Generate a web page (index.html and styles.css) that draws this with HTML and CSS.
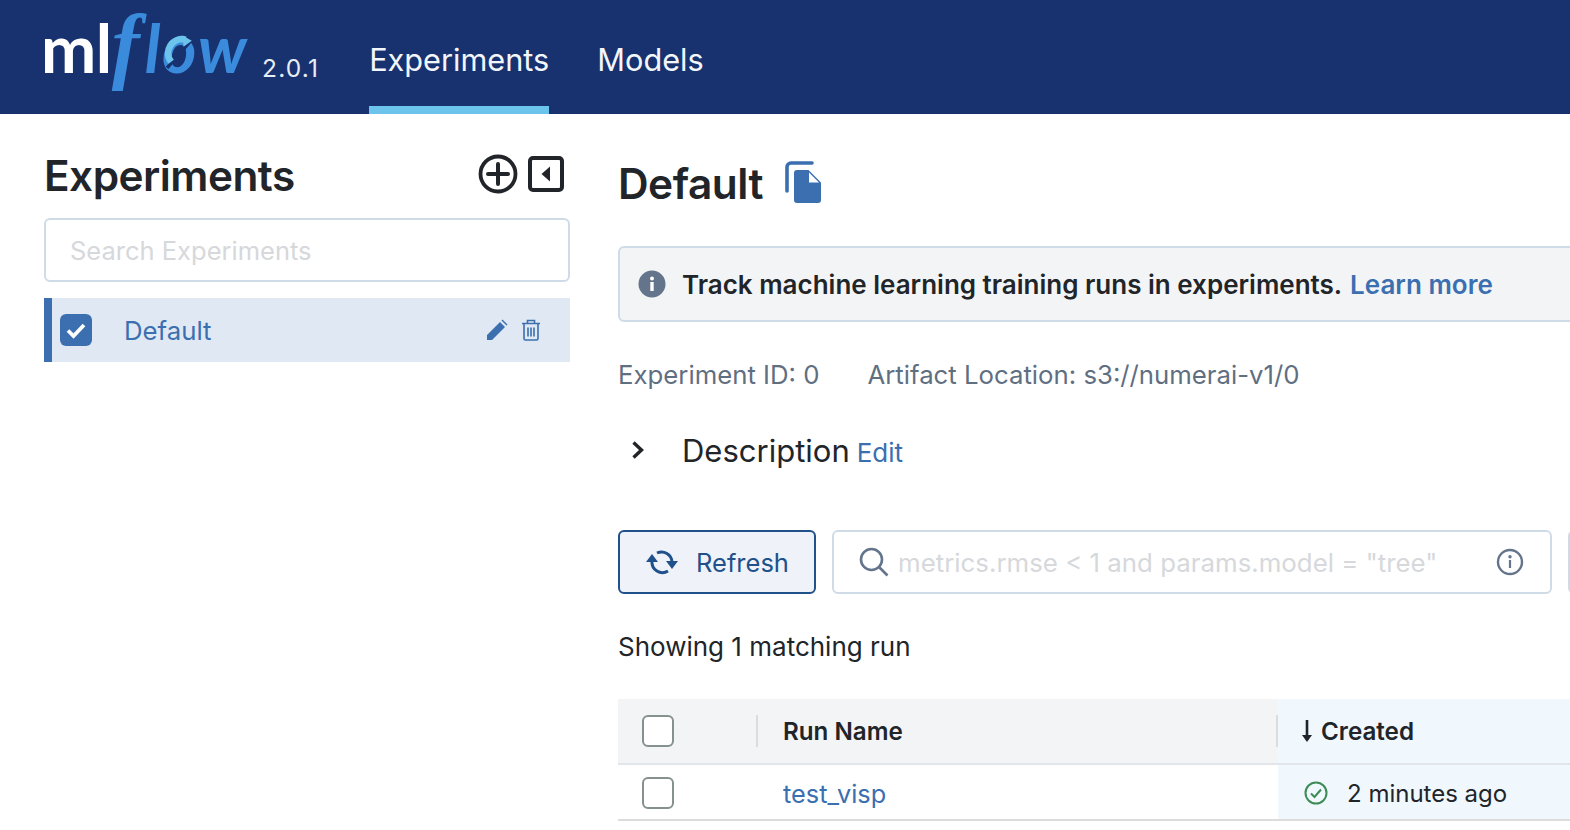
FILE: index.html
```html
<!DOCTYPE html>
<html lang="en">
<head>
  <meta charset="UTF-8">
  <title>MLflow Experiments</title>
  <link rel="stylesheet" href="styles.css">
</head>
<body>
  <header class="topbar">
    <div class="logo">
      <span class="logo-ml">ml</span><span class="logo-f">f</span><span class="logo-flow">l<span class="logo-o">o<svg class="logo-arrows" viewBox="0 0 34 34"><path d="M29 2L3 32" stroke="#17326f" stroke-width="3.500"/><path d="M7 26A13.500 13.500 0 0 1 21 4.500" fill="none" stroke="#6cc4ec" stroke-width="6.500"/><path d="M18 .5l9 5-8 6z" fill="#6cc4ec"/></svg></span>w</span>
    </div>
    <span class="version">2.0.1</span>
    <nav class="nav">
      <a class="nav-item active">Experiments</a>
      <a class="nav-item">Models</a>
    </nav>
  </header>

  <div class="layout">
    <aside class="sidebar">
      <div class="side-head">
        <h1>Experiments</h1>
        <div class="side-actions">
          <svg class="ic-plus" viewBox="0 0 40 40"><circle cx="20" cy="20" r="17.500" fill="none" stroke="#212529" stroke-width="3.800"/><path d="M20 10v20M10 20h20" stroke="#212529" stroke-width="4" stroke-linecap="round"/></svg>
          <svg class="ic-collapse" viewBox="0 0 36 36"><rect x="2" y="2" width="32" height="32" rx="3" fill="none" stroke="#212529" stroke-width="4"/><path d="M22 10.500v15l-8.500-7.500z" fill="#212529"/></svg>
        </div>
      </div>
      <input class="side-search" placeholder="Search Experiments">
      <div class="exp-row">
        <span class="exp-check"><svg viewBox="0 0 32 32"><path d="M8 16.500l5.500 5.500L24 11" fill="none" stroke="#fff" stroke-width="3.800"/></svg></span>
        <span class="exp-name">Default</span>
        <svg class="ic-edit" viewBox="0 0 22 22"><path d="M1 21v-5L14 3l5 5L6 21zM15.500 1.500l1-1 5 5-1 1z" fill="#3b6fb0"/></svg>
        <svg class="ic-trash" viewBox="0 0 20 22"><path d="M1 4.500h18M6.500 4V1.500h7V4M3 5v14.500a1.500 1.500 0 0 0 1.500 1.500h11a1.500 1.500 0 0 0 1.500-1.500V5M7 8.500v9M10 8.500v9M13 8.500v9" fill="none" stroke="#3b6fb0" stroke-width="1.600"/></svg>
      </div>
    </aside>

    <main class="content">
      <div class="title-row">
        <h2>Default</h2>
        <svg class="ic-copy" viewBox="0 0 36 42"><path d="M2 30V6a4 4 0 0 1 4-4h21" fill="none" stroke="#3b6fb0" stroke-width="3.600" stroke-linecap="round"/><path d="M9 12a3 3 0 0 1 3-3h11.500L36 21.500V39a3 3 0 0 1-3 3H12a3 3 0 0 1-3-3z" fill="#3b6fb0"/><path d="M24 11.500l10 10H24z" fill="#fff"/></svg>
      </div>

      <div class="banner">
        <svg class="ic-info" viewBox="0 0 28 28"><circle cx="14" cy="14" r="13.500" fill="#64748b"/><circle cx="14" cy="8.500" r="2" fill="#fff"/><rect x="12.300" y="12" width="3.400" height="9" fill="#fff"/></svg>
        <span class="banner-text">Track machine learning training runs in experiments.</span>
        <a class="link banner-link">Learn more</a>
      </div>

      <div class="meta">
        <span>Experiment ID: 0</span>
        <span>Artifact Location: s3://numerai-v1/0</span>
      </div>

      <div class="desc-row">
        <svg class="ic-chevron" viewBox="0 0 14 20"><path d="M2.500 2.500L10.500 10l-8 7.500" fill="none" stroke="#212529" stroke-width="3.400"/></svg>
        <span class="desc-label">Description</span>
        <a class="link desc-edit">Edit</a>
      </div>

      <div class="toolbar">
        <button class="refresh">
          <svg viewBox="0 0 32 26"><path d="M6 12A10.500 10.500 0 0 0 22 22M11 4A10.500 10.500 0 0 1 26 13" fill="none" stroke="#20518a" stroke-width="3"/><path d="M6 5l6 8H0zM26 20l6-8H20z" fill="#20518a"/></svg>
          Refresh
        </button>
        <div class="search-box">
          <svg class="ic-search" viewBox="0 0 30 30"><circle cx="12.500" cy="12.500" r="10.500" fill="none" stroke="#64748b" stroke-width="2.600"/><path d="M20 20l8.500 8.500" stroke="#64748b" stroke-width="2.600"/></svg>
          <span class="placeholder">metrics.rmse &lt; 1 and params.model = "tree"</span>
          <svg class="ic-info-line" viewBox="0 0 28 28"><circle cx="14" cy="14" r="12" fill="none" stroke="#64748b" stroke-width="2.400"/><circle cx="14" cy="8.800" r="1.700" fill="#64748b"/><rect x="12.900" y="12" width="2.200" height="8" fill="#64748b"/></svg>
        </div>
        <div class="next-box"></div>
      </div>

      <p class="count">Showing 1 matching run</p>

      <div class="runs">
        <div class="run-row run-head">
          <div class="cell cell-check"><span class="box"></span></div>
          <div class="cell cell-name">Run Name</div>
          <div class="cell cell-created">
            <svg class="ic-down" viewBox="0 0 12 24"><path d="M6 1v20" stroke="#212529" stroke-width="2.600"/><path d="M1 16h10l-5 7z" fill="#212529"/></svg>
            Created
          </div>
        </div>
        <div class="run-row run-body">
          <div class="cell cell-check"><span class="box"></span></div>
          <div class="cell cell-name"><a class="link">test_visp</a></div>
          <div class="cell cell-created">
            <svg class="ic-ok" viewBox="0 0 24 24"><circle cx="12" cy="12" r="10.500" fill="none" stroke="#3d8b55" stroke-width="2"/><path d="M7 12.500l3.500 3.500L17 8.500" fill="none" stroke="#3d8b55" stroke-width="2"/></svg>
            2 minutes ago
          </div>
        </div>
      </div>
    </main>
  </div>
</body>
</html>
```

FILE: styles.css
```css
html, body { margin: 0; height: 830px; overflow: hidden; }
body { font-family: Inter, "Liberation Sans", sans-serif; color: #212529; background: #fff; font-size: 25.75px; }
.link { color: #3b6fb0; text-decoration: none; }

/* top bar */
.topbar { height: 114px; background: #17326f; display: flex; align-items: stretch; padding-left: 41px; box-sizing: border-box; }
.logo { width: 211px; height: 114px; flex: none; display: flex; align-items: baseline; padding-top: 4px; box-sizing: border-box; line-height: 82px; white-space: nowrap; }
.logo-ml { font-family: Lato, sans-serif; font-weight: 700; font-size: 66px; color: #fff; letter-spacing: -0.5px; }
.logo-f { font-family: "Liberation Serif", serif; font-style: italic; font-weight: 700; font-size: 84px; color: #3b8bdc; margin: 0 5px 0 0; }
.logo-flow { font-family: Lato, sans-serif; font-style: italic; font-weight: 700; font-size: 66px; color: #3b8bdc; letter-spacing: 1.500px; }
.logo-o { position: relative; }
.logo-arrows { position: absolute; left: 2px; top: 27px; width: 35px; height: 35px; }
.version { color: #e6edf7; font-size: 24.500px; letter-spacing: 1.200px; margin: 53px 50px 0 10px; line-height: 30px; }
.nav { display: flex; gap: 48px; }
.nav-item { height: 114px; box-sizing: border-box; color: #f3f6fb; font-size: 30.700px; line-height: 120px; }
.nav-item.active { border-bottom: 8px solid #6cc4ec; }

/* page */
.layout { display: flex; padding-left: 44px; }
.sidebar { width: 526px; margin-right: 48px; flex: none; }
.side-head { display: flex; justify-content: space-between; height: 104px; }
.side-head h1 { margin: 33px 0 0; font-size: 42.300px; line-height: 58px; font-weight: 600; letter-spacing: -0.5px; }
.side-actions { display: flex; gap: 10px; margin: 40px 6px 0 0; align-items: flex-start; }
.ic-plus { width: 40px; height: 40px; }
.ic-collapse { width: 36px; height: 36px; margin-top: 2px; }
.side-search { display: block; width: 100%; height: 64px; box-sizing: border-box; border: 2px solid #d0dbe8; border-radius: 6px; padding: 0 24px; font: 25.500px Inter, sans-serif; outline: none; }
.side-search::placeholder { color: #d6d8db; }
.exp-row { margin-top: 16px; height: 64px; background: #e0e8f3; border-left: 8px solid #3b6fb0; display: flex; align-items: center; box-sizing: border-box; padding-left: 8px; }
.exp-check { width: 32px; height: 32px; background: #3b6fb0; border-radius: 6px; flex: none; }
.exp-check svg { display: block; }
.exp-name { color: #3b6fb0; margin-left: 32px; flex: 1; }
.ic-edit { width: 22px; height: 22px; margin-right: 13px; }
.ic-trash { width: 20px; height: 22px; margin-right: 29px; }

/* main column */
.content { width: 1100px; flex: none; }
.title-row { display: flex; align-items: center; height: 132px; }
.title-row h2 { margin: 6px 0 0; font-size: 42.400px; font-weight: 600; letter-spacing: -0.5px; }
.ic-copy { width: 36px; height: 42px; margin: 4px 0 0 22px; }
.banner { height: 76px; box-sizing: border-box; background: #f3f4f6; border: 2px solid #d0dbe8; border-radius: 6px; display: flex; align-items: center; padding-left: 18px; font-weight: 600; font-size: 26px; }
.ic-info { width: 28px; height: 28px; margin-right: 16px; }
.banner-link { margin-left: 8px; }
.meta { display: flex; gap: 48px; color: #5f6f82; margin-top: 36px; line-height: 34px; }
.desc-row { display: flex; align-items: center; margin-top: 35px; height: 46px; }
.ic-chevron { width: 14px; height: 20px; margin: 0 37px 0 13px; }
.desc-label { font-size: 31px; }
.desc-edit { margin-left: 7px; margin-top: 4px; font-size: 26px; }
.toolbar { display: flex; gap: 16px; margin-top: 57px; }
.refresh { width: 198px; height: 64px; box-sizing: border-box; background: #eff3f9; border: 2px solid #20518a; border-radius: 6px; color: #20518a; font: 25.500px Inter, sans-serif; display: flex; align-items: center; padding: 0 0 0 26px; }
.refresh svg { width: 32px; height: 26px; margin-right: 18px; }
.search-box { width: 720px; height: 64px; box-sizing: border-box; border: 2px solid #d0dbe8; border-radius: 6px; display: flex; align-items: center; padding-left: 25px; flex: none; }
.ic-search { width: 30px; height: 30px; margin-right: 9px; }
.placeholder { color: #d6d8db; flex: 1; white-space: nowrap; font-size: 25.850px; }
.ic-info-line { width: 28px; height: 28px; margin-right: 26px; }
.next-box { width: 60px; height: 64px; box-sizing: border-box; border: 2px solid #d0dbe8; border-radius: 6px; flex: none; }
.count { margin: 36px 0 0; line-height: 34px; font-size: 26px; }

/* runs table */
.runs { margin-top: 35px; }
.run-row { display: flex; box-sizing: border-box; }
.run-head { height: 66px; background: #f3f4f6; border-bottom: 2px solid #e2e5e9; font-weight: 600; font-size: 24.200px; }
.run-body { height: 56px; border-bottom: 2px solid #dcdcdc; font-size: 24px; }
.run-body .cell { padding-top: 2px; }
.cell { display: flex; align-items: center; box-sizing: border-box; }
.cell-check { width: 138px; padding-left: 24px; }
.box { width: 32px; height: 32px; box-sizing: border-box; border: 2px solid #84918f; border-radius: 6px; background: #fff; }
.cell-name { width: 522px; padding-left: 27px; position: relative; }
.run-body .cell-name { font-size: 25.300px; }
.cell-created { flex: 1; background: #f0f7fd; padding-left: 23px; }
.run-head .cell-name::before, .run-head .cell-name::after { content: ""; position: absolute; top: 16px; height: 32px; width: 2px; background: #dadcdf; }
.run-head .cell-name::before { left: 0; }
.run-head .cell-name::after { right: 0; }
.ic-down { width: 12px; height: 24px; margin-right: 8px; }
.ic-ok { width: 24px; height: 24px; margin: 0 19px 0 3px; }
```
